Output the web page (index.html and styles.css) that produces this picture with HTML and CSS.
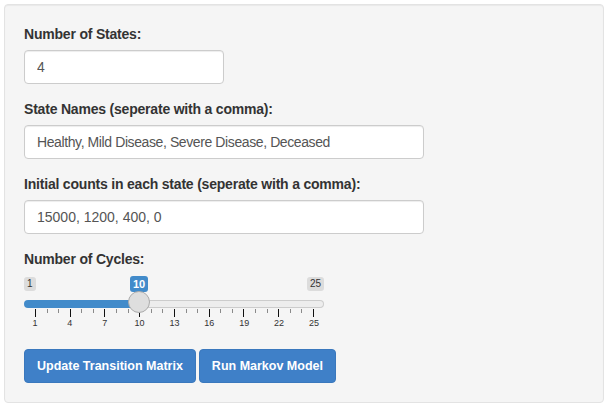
FILE: index.html
```html
<!DOCTYPE html>
<html>
<head>
<meta charset="utf-8">
<link rel="stylesheet" href="styles.css">
</head>
<body>
<div class="well">
  <div class="form-group">
    <label class="control-label">Number of States:</label>
    <input class="form-control narrow" type="text" value="4">
  </div>
  <div class="form-group">
    <label class="control-label">State Names (seperate with a comma):</label>
    <input class="form-control tight" type="text" value="Healthy, Mild Disease, Severe Disease, Deceased">
  </div>
  <div class="form-group">
    <label class="control-label">Initial counts in each state (seperate with a comma):</label>
    <input class="form-control" type="text" value="15000, 1200, 400, 0">
  </div>
  <div class="form-group">
    <label class="control-label">Number of Cycles:</label>
    <div class="irs">
      <div class="irs-labels">
        <span class="irs-min">1</span>
        <span class="irs-max">25</span>
      </div>
      <span class="irs-single" style="left: 106px">10</span>
      <div class="irs-track">
        <div class="irs-bar" style="width: 115px"></div>
        <div class="irs-line"></div>
      </div>
      <span class="irs-handle" style="left: 104px"></span>
      <div class="irs-grid">
        <i class="pol major"></i><i class="pol"></i><i class="pol"></i>
        <i class="pol major"></i><i class="pol"></i><i class="pol"></i>
        <i class="pol major"></i><i class="pol"></i><i class="pol"></i>
        <i class="pol major"></i><i class="pol"></i><i class="pol"></i>
        <i class="pol major"></i><i class="pol"></i><i class="pol"></i>
        <i class="pol major"></i><i class="pol"></i><i class="pol"></i>
        <i class="pol major"></i><i class="pol"></i><i class="pol"></i>
        <i class="pol major"></i><i class="pol"></i><i class="pol"></i>
        <i class="pol major"></i>
      </div>
      <div class="irs-grid-text">
        <span>1</span><span>4</span><span>7</span><span>10</span><span>13</span><span>16</span><span>19</span><span>22</span><span>25</span>
      </div>
    </div>
  </div>
  <div class="buttons">
    <button class="btn">Update Transition Matrix</button>
    <button class="btn">Run Markov Model</button>
  </div>
</div>
</body>
</html>
```

FILE: styles.css
```css
* { box-sizing: border-box; }
html, body { margin: 0; padding: 0; background: #ffffff; }
body {
  font-family: "Liberation Sans", Arial, sans-serif;
  font-size: 14px;
  line-height: 20px;
  color: #333333;
}
.well {
  margin: 4px;
  width: 600px;
  padding: 19px;
  background: #f5f5f5;
  border: 1px solid #e3e3e3;
  border-radius: 4px;
  box-shadow: inset 0 1px 1px rgba(0,0,0,0.05);
}
.form-group { margin-bottom: 15px; }
.control-label {
  display: block;
  font-weight: bold;
  margin-bottom: 6px;
  line-height: 20px;
  letter-spacing: -0.2px;
}
.form-control {
  display: block;
  width: 400px;
  height: 34px;
  padding: 6px 12px;
  font-family: "Liberation Sans", Arial, sans-serif;
  font-size: 14px;
  line-height: 20px;
  color: #555555;
  background: #ffffff;
  border: 1px solid #cccccc;
  border-radius: 4px;
  box-shadow: inset 0 1px 1px rgba(0,0,0,0.075);
  outline: none;
}
.form-control.narrow { width: 200px; }
.form-control.tight { letter-spacing: -0.4px; }

.irs {
  position: relative;
  width: 300px;
  height: 59px;
  padding-top: 2px;
}
.irs-labels {
  display: flex;
  justify-content: space-between;
  height: 14px;
}
.irs-min, .irs-max {
  font-size: 10px;
  line-height: 12px;
  padding: 1px 3px;
  color: #333;
  background: rgba(0,0,0,0.1);
  border-radius: 3px;
}
.irs-single {
  position: absolute;
  top: 1px;
  font-size: 11px;
  font-weight: bold;
  line-height: 14px;
  padding: 1px 3px;
  color: #fff;
  background: #428bca;
  border-radius: 3px;
}
.irs-track {
  display: flex;
  height: 8px;
  margin-top: 9px;
}
.irs-bar {
  height: 8px;
  background: #428bca;
  border-radius: 4px 0 0 4px;
}
.irs-line {
  flex: 1;
  height: 8px;
  background: #ededed;
  border: 1px solid #cccccc;
  border-left: none;
  border-radius: 0 4px 4px 0;
}
.irs-handle {
  position: absolute;
  top: 16px;
  width: 22px;
  height: 22px;
  border-radius: 50%;
  background: #dedede;
  border: 1px solid #ababab;
}
.irs-grid {
  display: flex;
  justify-content: space-between;
  align-items: flex-start;
  margin: 1px 0 0 11px;
  width: 279px;
  height: 9px;
}
.pol {
  display: block;
  width: 1px;
  height: 4px;
  background: #8a8a8a;
}
.pol.major { height: 8px; background: #111; }
.irs-grid-text {
  display: flex;
  justify-content: space-between;
  margin-left: 1px;
  width: 299px;
  font-size: 9px;
  line-height: 11px;
  color: #333;
}
.irs-grid-text span { width: 20px; text-align: center; }

.buttons { display: flex; gap: 3px; }
.btn {
  height: 34px;
  padding: 6px 12px;
  font-family: "Liberation Sans", Arial, sans-serif;
  font-size: 12.5px;
  font-weight: bold;
  line-height: 20px;
  color: #ffffff;
  background: #3f80c8;
  border: 1px solid #3a78bd;
  border-radius: 4px;
}
```
